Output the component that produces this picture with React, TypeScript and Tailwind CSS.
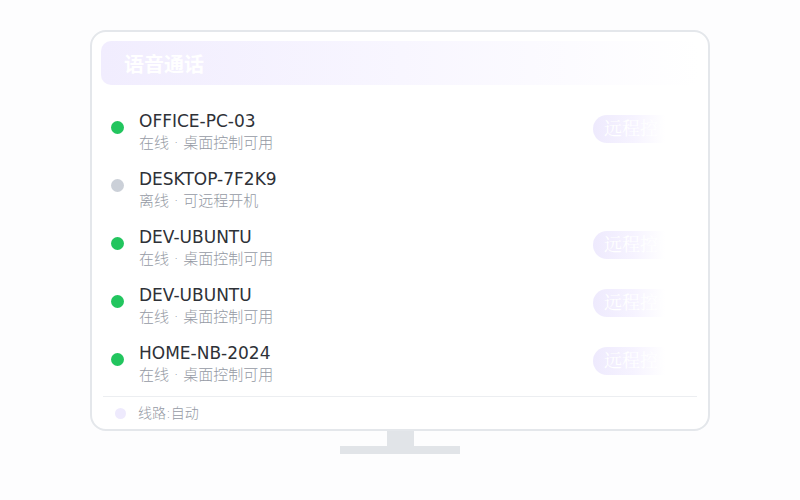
import React from 'react';

interface Device {
  name: string;
  online: boolean;
  status: string;
}

const devices: Device[] = [
  { name: 'OFFICE-PC-03', online: true, status: '在线 · 桌面控制可用' },
  { name: 'DESKTOP-7F2K9', online: false, status: '离线 · 可远程开机' },
  { name: 'DEV-UBUNTU', online: true, status: '在线 · 桌面控制可用' },
  { name: 'DEV-UBUNTU', online: true, status: '在线 · 桌面控制可用' },
  { name: 'HOME-NB-2024', online: true, status: '在线 · 桌面控制可用' },
];

const sans = "font-['DejaVu_Sans','Noto_Sans_CJK_SC',sans-serif]";

const DeviceRow: React.FC<{ device: Device }> = ({ device }) => (
  <div className="flex h-[58px] items-start">
    <span
      className={`mt-[12px] ml-[10px] h-[13px] w-[13px] shrink-0 rounded-full ${
        device.online ? 'bg-[#22c55e]' : 'bg-[#cbd0d8]'
      }`}
    />
    <div className="ml-[15px] flex-1 pt-[1px]">
      <div className="text-[17px] leading-[22px] text-[#2e3137]">{device.name}</div>
      <div className="mt-[1px] text-[15px] font-light leading-[20px] text-[#959aa4]">{device.status}</div>
    </div>
    {device.online && (
      <div className="mt-[6px] mr-[16px] h-[28px] w-[90px] rounded-full bg-gradient-to-r from-[#eeeafd] via-[#f6f3ff] via-45% to-white to-80% pl-[11px]">
        <span className="block whitespace-nowrap font-['Liberation_Serif','Noto_Serif_CJK_SC','Noto_Sans_CJK_SC',serif] text-[18px] leading-[28px] text-white">
          远程控制
        </span>
      </div>
    )}
  </div>
);

export default function App() {
  return (
    <div className={`min-h-[500px] w-full bg-[#fdfdfe] pt-[30px] ${sans}`}>
      <div className="mx-auto flex h-[401px] w-[620px] flex-col rounded-[16px] border-2 border-[#e4e7eb] bg-white px-[9px] pt-[9px]">
        <div className="flex h-[45px] items-center rounded-[10px] bg-gradient-to-r from-[#f1edfe] via-[#f8f6ff] to-white pl-[23px] pt-[3px]">
          <span className="text-[20px] font-bold leading-none text-white">语音通话</span>
        </div>
        <div className="mt-[24px] flex flex-col">
          {devices.map((d, i) => (
            <DeviceRow key={i} device={d} />
          ))}
        </div>
        <div className="mx-[2px] mt-[-3px] border-t border-[#eceef1]" />
        <div className="flex h-[32px] items-center pl-[14px]">
          <span className="h-[11px] w-[11px] rounded-full bg-[#eeeafd]" />
          <span className="ml-[12px] text-[14px] font-light text-[#959aa4]">线路:自动</span>
        </div>
      </div>
      <div className="flex flex-col items-center">
        <div className="ml-[1px] h-[15px] w-[27px] bg-[#e1e4e8]" />
        <div className="h-[8px] w-[120px] bg-[#e1e4e8]" />
      </div>
    </div>
  );
}
